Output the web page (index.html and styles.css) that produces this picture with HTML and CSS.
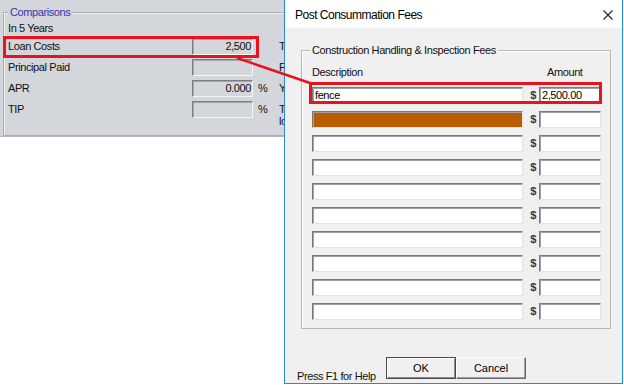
FILE: index.html
```html
<!DOCTYPE html>
<html lang="en">
<head>
    <meta charset="UTF-8">
    <meta name="viewport" content="width=device-width, initial-scale=1.0">
    <title>Post Consummation Fees</title>
    <link rel="stylesheet" href="styles.css">
</head>
<body>
    <div class="screen">
        <div class="panel">
            <div class="group">
                <span class="group-title blue">Comparisons</span>
                <div class="period">In 5 Years</div>
                <div class="compare-grid">
                    <span class="label">Loan Costs</span>
                    <span class="field">2,500</span>
                    <span class="unit"></span>
                    <span class="side">Total Payments</span>

                    <span class="label">Principal Paid</span>
                    <span class="field"></span>
                    <span class="unit"></span>
                    <span class="side">Payments</span>

                    <span class="label">APR</span>
                    <span class="field">0.000</span>
                    <span class="unit">%</span>
                    <span class="side">Yield</span>

                    <span class="label">TIP</span>
                    <span class="field"></span>
                    <span class="unit">%</span>
                    <span class="side">Total interest<br>loan</span>
                </div>
            </div>
        </div>

        <div class="dialog">
            <div class="titlebar">
                <span class="title">Post Consummation Fees</span>
                <svg class="close" width="10" height="10" viewBox="0 0 10 10">
                    <path d="M0.5 0.5 L9.5 9.5 M9.5 0.5 L0.5 9.5" stroke="#222" stroke-width="1.1" fill="none"/>
                </svg>
            </div>
            <div class="dialog-body">
                <div class="fees-group">
                    <span class="group-title">Construction Handling &amp; Inspection Fees</span>
                    <div class="fees-head">
                        <span class="head-desc">Description</span>
                        <span class="head-amount">Amount</span>
                    </div>
                    <div class="fee-row"><span class="input desc">fence</span><span class="dollar">$</span><span class="input amount">2,500.00</span></div>
                    <div class="fee-row"><span class="input desc selected"></span><span class="dollar">$</span><span class="input amount"></span></div>
                    <div class="fee-row"><span class="input desc"></span><span class="dollar">$</span><span class="input amount"></span></div>
                    <div class="fee-row"><span class="input desc"></span><span class="dollar">$</span><span class="input amount"></span></div>
                    <div class="fee-row"><span class="input desc"></span><span class="dollar">$</span><span class="input amount"></span></div>
                    <div class="fee-row"><span class="input desc"></span><span class="dollar">$</span><span class="input amount"></span></div>
                    <div class="fee-row"><span class="input desc"></span><span class="dollar">$</span><span class="input amount"></span></div>
                    <div class="fee-row"><span class="input desc"></span><span class="dollar">$</span><span class="input amount"></span></div>
                    <div class="fee-row"><span class="input desc"></span><span class="dollar">$</span><span class="input amount"></span></div>
                    <div class="fee-row"><span class="input desc"></span><span class="dollar">$</span><span class="input amount"></span></div>
                </div>
                <div class="dialog-footer">
                    <span class="help">Press F1 for Help</span>
                    <button class="btn btn-default" type="button">OK</button>
                    <button class="btn" type="button">Cancel</button>
                </div>
            </div>
        </div>

        <svg class="callouts" width="624" height="385" viewBox="0 0 624 385">
            <rect x="4.5" y="37.5" width="253" height="19" fill="none" stroke="#e8131f" stroke-width="3"/>
            <rect x="310.5" y="83.5" width="290" height="19" fill="none" stroke="#e8131f" stroke-width="3"/>
            <line x1="237" y1="58" x2="310" y2="83" stroke="#e8131f" stroke-width="2.5"/>
        </svg>
    </div>
</body>
</html>
```

FILE: styles.css
```css
body {
    margin: 0;
    background: #fff;
    font-family: "Liberation Sans", Arial, sans-serif;
    font-size: 11px;
    letter-spacing: -0.4px;
    color: #111;
}
.screen {
    position: relative;
    width: 624px;
    height: 385px;
    overflow: hidden;
}

/* comparisons panel behind the dialog */
.panel {
    width: 300px;
    height: 137px;
    background: #d3d7db;
    border-bottom: 1px solid #b4b8bc;
    padding-top: 12px;
    box-sizing: border-box;
}
.group {
    margin-left: 3px;
    height: 124px;
    box-sizing: border-box;
    border: 1px solid #a9aeb3;
    box-shadow: inset 1px 1px 0 #eef0f2;
    padding-left: 4px;
}
.group-title {
    display: block;
    width: max-content;
    line-height: 13px;
    height: 13px;
    margin-top: -7px;
    margin-left: 4px;
    padding: 0 2px;
}
.panel .group-title {
    margin-left: 0;
    background: #d3d7db;
}
.blue {
    color: #3535ae;
}
.period {
    line-height: 14px;
    margin-top: 2px;
}
.compare-grid {
    display: grid;
    grid-template-columns: 184px 61px 26px 1fr;
    grid-auto-rows: 17px;
    row-gap: 4px;
    margin-top: 3px;
    white-space: nowrap;
}
.label, .unit {
    line-height: 17px;
}
.unit {
    padding-left: 5px;
}
.field {
    box-sizing: border-box;
    border: 1px solid;
    border-color: #7c7f82 #f4f5f6 #f4f5f6 #7c7f82;
    box-shadow: inset 1px 1px 0 #a3a7ab;
    text-align: right;
    line-height: 15px;
    padding-right: 1px;
}
.side {
    line-height: 12px;
    padding-top: 2px;
}

/* dialog window */
.dialog {
    position: absolute;
    left: 284px;
    top: -1px;
    width: 337px;
    height: 383px;
    border: 1px solid #2b88d8;
    display: flex;
    flex-direction: column;
    background: #f0f0f0;
}
.titlebar {
    height: 28px;
    flex: none;
    background: #fff;
    display: flex;
    align-items: center;
    justify-content: space-between;
    padding: 1px 9px 0 10px;
    box-sizing: border-box;
}
.title {
    font-size: 12px;
    letter-spacing: -0.5px;
    color: #000;
}
.dialog-body {
    flex: 1;
    min-height: 0;
    padding: 22px 11px 0 12px;
    display: flex;
    flex-direction: column;
}
.fees-group {
    flex: none;
    margin-left: 4px;
    border: 1px solid #b8b8b8;
    box-shadow: inset 1px 1px 0 #fff;
    padding: 0 9px 8px 6px;
}
.fees-group .group-title {
    margin-left: 2px;
    background: #f0f0f0;
}
.fees-head {
    display: flex;
    line-height: 13px;
    margin: 9px 0 8px 4px;
}
.head-desc {
    width: 235px;
}
.fee-row {
    display: flex;
    height: 17px;
    margin-bottom: 7px;
    margin-left: 4px;
}
.fee-row:last-child {
    margin-bottom: 0;
}
.input {
    box-sizing: border-box;
    height: 17px;
    background: #fff;
    border: 1px solid;
    border-color: #7a7a7a #e3e3e3 #e3e3e3 #7a7a7a;
    box-shadow: inset 1px 1px 0 #a0a0a0;
    line-height: 15px;
    padding: 0 2px;
    color: #000;
}
.desc {
    width: 211px;
}
.desc.selected {
    background: #b95d00;
}
.dollar {
    width: 16px;
    box-sizing: border-box;
    text-align: right;
    padding-right: 3px;
    line-height: 17px;
    color: #3a3a3a;
    font-weight: bold;
}
.amount {
    width: 62px;
}
.dialog-footer {
    flex: none;
    display: flex;
    height: 26px;
    margin-top: 28px;
    align-items: flex-start;
}
.help {
    width: 89px;
    align-self: flex-end;
    line-height: 13px;
}
.btn {
    width: 70px;
    height: 22px;
    margin: 0;
    padding: 0;
    font: inherit;
    color: #000;
    background: #f0f0f0;
    border: 1px solid;
    border-color: #fff #696969 #696969 #fff;
    box-shadow: inset -1px -1px 0 #a0a0a0;
}
.btn-default {
    border-color: #4a4a4a;
    box-shadow: inset 1px 1px 0 #fff, inset -1px -1px 0 #8a8a8a;
}

/* red annotation marks */
.callouts {
    position: absolute;
    left: 0;
    top: 0;
    pointer-events: none;
}
```
